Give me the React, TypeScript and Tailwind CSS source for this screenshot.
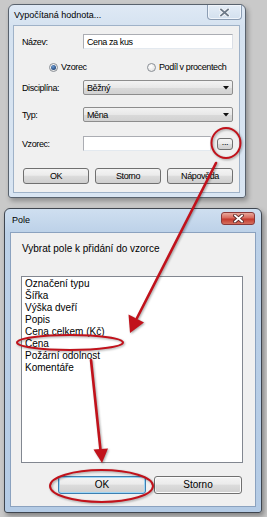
import type { ReactNode } from "react"

const narrow = "font-['Liberation_Sans',Arial,sans-serif] text-[9px] tracking-[-0.4px] leading-[12px] whitespace-nowrap"

const btnBase =
  "flex items-center justify-center rounded-[3px] border bg-[linear-gradient(to_bottom,#f4f4f4_0%,#ebebeb_45%,#dcdcdc_50%,#cfcfcf_100%)] text-black"

function CloseX({ fg, outline }: { fg: string; outline: string }) {
  return (
    <svg width="11" height="9" viewBox="0 0 11 9">
      <path d="M2 1.5 L9 7.5 M9 1.5 L2 7.5" stroke={outline} strokeWidth="3.6" strokeLinecap="square" />
      <path d="M2 1.5 L9 7.5 M9 1.5 L2 7.5" stroke={fg} strokeWidth="1.8" strokeLinecap="square" />
    </svg>
  )
}

function Combo({ value }: { value: string }) {
  return (
    <div className="flex h-[15px] w-[150px] items-center justify-between rounded-[2px] border border-[#8d8d8d] bg-[linear-gradient(to_bottom,#f3f3f3_0%,#e8e8e8_50%,#dadada_51%,#d2d2d2_100%)] pl-[3px] pr-[3px]">
      <span>{value}</span>
      <svg width="6" height="4" viewBox="0 0 6 4">
        <path d="M0 0 H6 L3 3.5 Z" fill="#111" />
      </svg>
    </div>
  )
}

function Radio({ checked, label }: { checked?: boolean; label: string }) {
  return (
    <div className="flex items-center gap-[3px]">
      <div className="flex h-[9px] w-[9px] items-center justify-center rounded-full border border-[#8a8f96] bg-[radial-gradient(circle_at_40%_35%,#ffffff_0%,#dcdcdc_100%)]">
        {checked && <div className="h-[5px] w-[5px] rounded-full bg-[radial-gradient(circle_at_40%_35%,#6c9bd2_0%,#1b3f73_80%)]" />}
      </div>
      <span>{label}</span>
    </div>
  )
}

function Row({ label, children }: { label: string; children: ReactNode }) {
  return (
    <div className="flex items-center">
      <span className="w-[61px]">{label}</span>
      {children}
    </div>
  )
}

const items = [
  "Označení typu",
  "Šířka",
  "Výška dveří",
  "Popis",
  "Cena celkem (Kč)",
  "Cena",
  "Požární odolnost",
  "Komentáře",
]

export default function App() {
  return (
    <div className="relative h-[517px] w-[267px] overflow-hidden bg-[#c9c9c9] pt-[4px]">
      {/* calculated value dialog (inactive) */}
      <div className="ml-[8px] flex h-[194px] w-[238px] flex-col rounded-t-[6px] rounded-b-[3px] border border-[#59626d] bg-[linear-gradient(to_bottom,#dfe9f5_0px,#d5e2f0_22px,#d9e5f2_100%)] pb-[4px] pl-[4px] pr-[5px] shadow-[2px_3px_5px_rgba(0,0,0,0.3)]">
        <div className="flex h-[20px] items-start justify-between">
          <span className="pl-px pt-[4px] font-['Liberation_Sans',Arial,sans-serif] text-[9px] leading-[12px] text-black">
            Vypočítaná hodnota...
          </span>
          <div className="-mr-[2px] flex h-[15px] w-[35px] items-center justify-center rounded-b-[4px] border border-t-0 border-[#8c9db3] bg-[linear-gradient(to_bottom,#e4edf7_0%,#d3e0ee_100%)] shadow-[inset_0_0_0_1px_#f0f5fb]">
            <CloseX fg="#6e7a88" outline="#f7f9fc" />
          </div>
        </div>
        <div className={`flex flex-1 flex-col border border-[#9fb2c8] bg-[#f0f0f0] pl-[8px] text-black ${narrow}`}>
          <div className="mt-[8px]">
            <Row label="Název:">
              <div className="flex h-[15px] w-[150px] items-center border border-[#abadb3] border-b-[#e3e9ef] border-r-[#dbdfe6] bg-white pl-[3px]">
                Cena za kus
              </div>
            </Row>
          </div>
          <div className="mt-[12px] flex h-[12px] items-center pl-[27px]">
            <div className="w-[98px]">
              <Radio checked label="Vzorec" />
            </div>
            <Radio label="Podíl v procentech" />
          </div>
          <div className="mt-[7px]">
            <Row label="Disciplína:">
              <Combo value="Běžný" />
            </Row>
          </div>
          <div className="mt-[12px]">
            <Row label="Typ:">
              <Combo value="Měna" />
            </Row>
          </div>
          <div className="mt-[14px]">
            <Row label="Vzorec:">
              <div className="h-[15px] w-[128px] border border-[#abadb3] border-b-[#e3e9ef] border-r-[#dbdfe6] bg-white" />
              <div className={`ml-[6px] h-[12px] w-[16px] border-[#707070] pb-[3px] ${btnBase}`}>...</div>
            </Row>
          </div>
          <div className="ml-px mt-[17px] flex gap-[6px]">
            <div className={`h-[16px] w-[66px] border-[#707070] ${btnBase}`}>OK</div>
            <div className={`h-[16px] w-[66px] border-[#707070] ${btnBase}`}>Storno</div>
            <div className={`h-[16px] w-[66px] border-[#707070] ${btnBase}`}>Nápověda</div>
          </div>
        </div>
      </div>

      {/* field picker dialog (active) */}
      <div className="ml-[4px] mt-[10px] flex h-[305px] w-[258px] flex-col rounded-t-[6px] rounded-b-[3px] border border-[#3f4650] bg-[linear-gradient(to_bottom,#cfdff0_0px,#bcd1e8_24px,#b4cbe5_100%)] px-[5px] pb-[5px] shadow-[2px_3px_5px_rgba(0,0,0,0.35)]">
        <div className="flex h-[23px] items-start justify-between">
          <span className="pl-[2px] pt-[5px] font-['Liberation_Sans',Arial,sans-serif] text-[9px] leading-[12px] text-black">
            Pole
          </span>
          <div className="mr-px mt-[3px] flex h-[13px] w-[34px] items-center justify-center rounded-[3px] border border-[#8b3a3a] bg-[linear-gradient(to_bottom,#e9a99c_0%,#d7685c_45%,#c4392d_55%,#d4705f_100%)]">
            <CloseX fg="#ffffff" outline="#5b2a2a" />
          </div>
        </div>
        <div className="flex flex-1 flex-col border border-[#8ba2bf] bg-[#f0f0f0] font-['Liberation_Sans',Arial,sans-serif] text-[10px] leading-[12px] text-black">
          <div className="pl-[11px] pt-[10px]">Vybrat pole k přidání do vzorce</div>
          <div className="ml-[10px] mt-[21px] flex h-[187px] w-[222px] flex-col border border-[#828790] bg-white pl-[3px] pt-px">
            {items.map((item) => (
              <div key={item}>{item}</div>
            ))}
          </div>
          <div className="ml-[47px] mt-[13px] flex gap-[8px]">
            <div className={`h-[18px] w-[88px] border-[#3c7fb1] shadow-[inset_0_0_0_1px_#9fd6f5] ${btnBase}`}>OK</div>
            <div className={`h-[18px] w-[88px] border-[#707070] shadow-[inset_0_0_0_1px_#fbfbfb] ${btnBase}`}>Storno</div>
          </div>
        </div>
      </div>

      {/* red annotations */}
      <svg
        className="pointer-events-none absolute left-0 top-0 drop-shadow-[1px_1px_1px_rgba(0,0,0,0.35)]"
        width="267"
        height="517"
        viewBox="0 0 267 517"
      >
        <g fill="none" stroke="#c1121b" strokeWidth="2" strokeLinecap="round">
          <ellipse cx="226" cy="143" rx="14.5" ry="15" />
          <line x1="216" y1="163" x2="137" y2="318" strokeWidth="2.6" />
          <ellipse cx="70" cy="342.5" rx="53" ry="7.5" />
          <line x1="91" y1="360" x2="100.5" y2="450" strokeWidth="2.6" />
          <ellipse cx="101.5" cy="486" rx="51.5" ry="16" />
        </g>
        <g fill="#c1121b">
          <path d="M130 333 L128.5 314.5 L144 322.5 Z" />
          <path d="M102 463 L93.5 449.5 L108 448.5 Z" />
        </g>
      </svg>
    </div>
  )
}
